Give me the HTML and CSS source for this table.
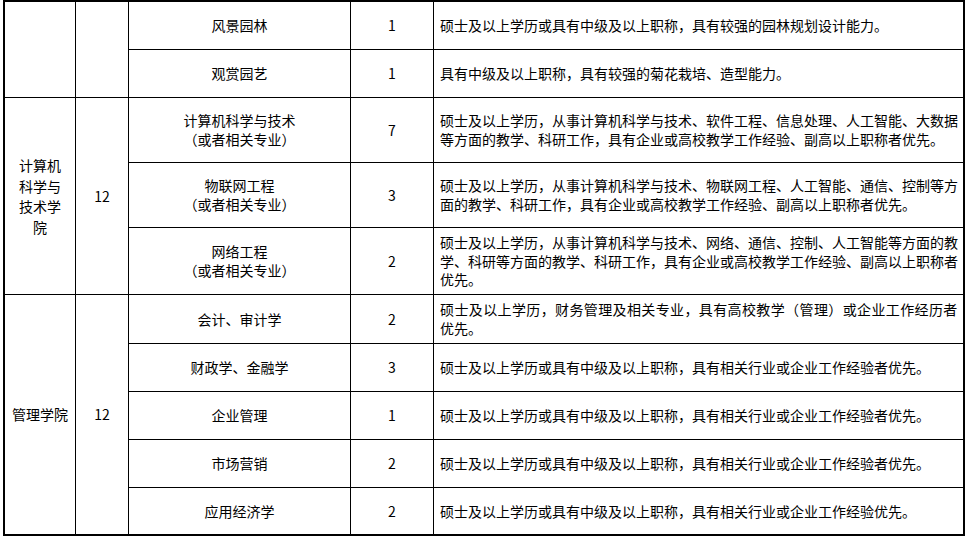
FILE: index.html
```html
<!DOCTYPE html>
<html lang="zh-CN">
<head>
<meta charset="utf-8">
<title>招聘岗位</title>
<link rel="stylesheet" href="styles.css">
</head>
<body>
<table class="jobs">
  <colgroup>
    <col class="c-college">
    <col class="c-total">
    <col class="c-major">
    <col class="c-num">
    <col class="c-req">
  </colgroup>
  <tbody>
    <tr class="h48">
      <td class="mid" rowspan="2"></td>
      <td class="mid" rowspan="2"></td>
      <td class="mid">风景园林</td>
      <td class="mid">1</td>
      <td class="req">硕士及以上学历或具有中级及以上职称，具有较强的园林规划设计能力。</td>
    </tr>
    <tr class="h48">
      <td class="mid">观赏园艺</td>
      <td class="mid">1</td>
      <td class="req">具有中级及以上职称，具有较强的菊花栽培、造型能力。</td>
    </tr>
    <tr class="h65">
      <td class="mid college" rowspan="3">计算机<br>科学与<br>技术学<br>院</td>
      <td class="mid" rowspan="3">12</td>
      <td class="mid">计算机科学与技术<br>（或者相关专业）</td>
      <td class="mid">7</td>
      <td class="req">硕士及以上学历，从事计算机科学与技术、软件工程、信息处理、人工智能、大数据<br>等方面的教学、科研工作，具有企业或高校教学工作经验、副高以上职称者优先。</td>
    </tr>
    <tr class="h65">
      <td class="mid">物联网工程<br>（或者相关专业）</td>
      <td class="mid">3</td>
      <td class="req">硕士及以上学历，从事计算机科学与技术、物联网工程、人工智能、通信、控制等方<br>面的教学、科研工作，具有企业或高校教学工作经验、副高以上职称者优先。</td>
    </tr>
    <tr class="h67">
      <td class="mid">网络工程<br>（或者相关专业）</td>
      <td class="mid">2</td>
      <td class="req">硕士及以上学历，从事计算机科学与技术、网络、通信、控制、人工智能等方面的教<br>学、科研等方面的教学、科研工作，具有企业或高校教学工作经验、副高以上职称者<br>优先。</td>
    </tr>
    <tr class="h49">
      <td class="mid college last" rowspan="5">管理学院</td>
      <td class="mid last" rowspan="5">12</td>
      <td class="mid">会计、审计学</td>
      <td class="mid">2</td>
      <td class="req"><span class="spread">硕士及以上学历，财务管理及相关专业，具有高校教学（管理）或企业工作经历者</span><br>优先。</td>
    </tr>
    <tr class="h48">
      <td class="mid">财政学、金融学</td>
      <td class="mid">3</td>
      <td class="req">硕士及以上学历或具有中级及以上职称，具有相关行业或企业工作经验者优先。</td>
    </tr>
    <tr class="h48">
      <td class="mid">企业管理</td>
      <td class="mid">1</td>
      <td class="req">硕士及以上学历或具有中级及以上职称，具有相关行业或企业工作经验者优先。</td>
    </tr>
    <tr class="h48">
      <td class="mid">市场营销</td>
      <td class="mid">2</td>
      <td class="req">硕士及以上学历或具有中级及以上职称，具有相关行业或企业工作经验者优先。</td>
    </tr>
    <tr class="h46 end">
      <td class="mid">应用经济学</td>
      <td class="mid">2</td>
      <td class="req">硕士及以上学历或具有中级及以上职称，具有相关行业或企业工作经验优先。</td>
    </tr>
  </tbody>
</table>
</body>
</html>
```
FILE: styles.css
```css
html, body {
  margin: 0;
  padding: 0;
  background: #ffffff;
}

body {
  font-family: "Noto Sans CJK SC", "Noto Sans", sans-serif;
  font-size: 14px;
  color: #000000;
}

.jobs {
  margin-left: 3px;
  width: 962px;
  table-layout: fixed;
  border-collapse: separate;
  border-spacing: 0;
  border: 2px solid #000000;
}

.c-college { width: 71px; }
.c-total { width: 53px; }
.c-major { width: 222px; }
.c-num { width: 83px; }
.c-req { width: 529px; }

.jobs td {
  box-sizing: border-box;
  padding: 0;
  border-right: 1px solid #000000;
  border-bottom: 1px solid #000000;
  vertical-align: middle;
  line-height: 18.6px;
  white-space: nowrap;
}

.jobs td:last-child {
  border-right: none;
}

.jobs tr.end td,
.jobs td.last {
  border-bottom: none;
}

.mid {
  text-align: center;
}

.college {
  line-height: 20.5px !important;
}

.req {
  text-align: left;
  padding-left: 6px !important;
}

.spread {
  letter-spacing: 0.38px;
}

.h46 { height: 46px; }
.h48 { height: 48px; }
.h49 { height: 49px; }
.h65 { height: 65px; }
.h67 { height: 67px; }
```
